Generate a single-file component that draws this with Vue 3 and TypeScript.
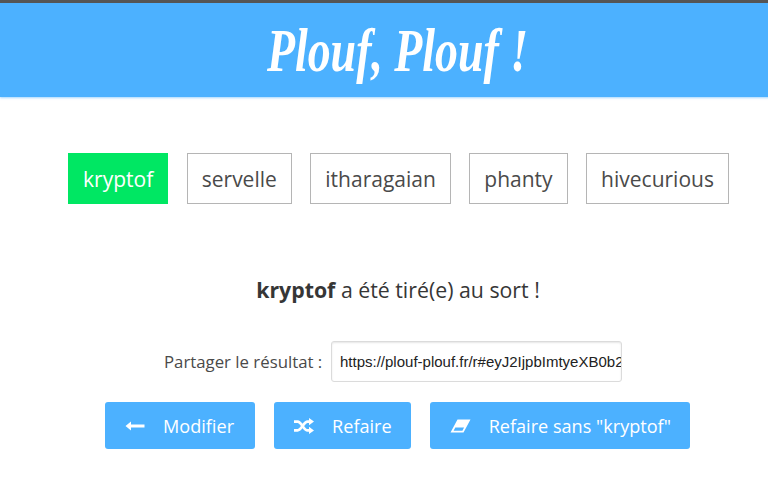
<script setup lang="ts">
const names = ['kryptof', 'servelle', 'itharagaian', 'phanty', 'hivecurious'];
const winner = 'kryptof';
const shareUrl = 'https://plouf-plouf.fr/r#eyJ2IjpbImtyeXB0b2YiLCJzZXJ2ZWxsZSJd';
</script>

<template>
  <div class="page">
    <header class="header">
      <h1 class="title">Plouf, Plouf !</h1>
    </header>

    <ul class="names">
      <li v-for="name in names" :key="name" class="name" :class="{ picked: name === winner }">{{ name }}</li>
    </ul>

    <p class="result"><strong>{{ winner }}</strong> a été tiré(e) au sort !</p>

    <div class="share">
      <label class="share-label" for="share-url">Partager le résultat :</label>
      <input id="share-url" class="share-input" type="text" readonly :value="shareUrl">
    </div>

    <div class="actions">
      <button class="btn btn-back" type="button">
        <svg class="icon" width="20" height="14" viewBox="0 0 20 14">
          <path d="M0.5 7 L6 2.6 V5.6 H19.5 V8.4 H6 V11.4 Z" fill="#fff" />
        </svg>
        Modifier
      </button>
      <button class="btn" type="button">
        <svg class="icon" width="20" height="16" viewBox="0 0 20 16">
          <path d="M0 3.6 H3.6 C7.6 3.6 9.4 12.4 13.6 12.4 H15.6" fill="none" stroke="#fff" stroke-width="2.7" />
          <path d="M0 12.4 H3.6 C7.6 12.4 9.4 3.6 13.6 3.6 H15.6" fill="none" stroke="#fff" stroke-width="2.7" />
          <path d="M15 0 L20 3.6 L15 7.2 Z M15 8.8 L20 12.4 L15 16 Z" fill="#fff" />
        </svg>
        Refaire
      </button>
      <button class="btn" type="button">
        <svg class="icon" width="21" height="14" viewBox="0 0 21 14">
          <path d="M7.5 0.5 H20.5 L13.5 13.5 H0.5 Z M3.6 11.8 H12.4 L14.1 8.6 H5.3 Z" fill="#fff" fill-rule="evenodd" />
        </svg>
        Refaire sans "kryptof"
      </button>
    </div>
  </div>
</template>

<style>
html, body {
  background: #fff;
  overflow: hidden;
}
</style>

<style scoped>
.page {
  width: 796px;
  height: 489px;
  overflow: hidden;
  border-top: 3px solid #555;
  box-sizing: border-box;
  font-family: "Open Sans", "Noto Sans", sans-serif;
  color: #4a4a4a;
}
.header {
  height: 94px;
  background: #4cb1ff;
  box-shadow: 0 1px 2px rgba(76, 177, 255, 0.5);
  display: flex;
  align-items: center;
  justify-content: center;
}
.title {
  margin: 0;
  color: #fff;
  font-family: "Liberation Serif", cursive;
  font-style: italic;
  font-weight: 700;
  font-size: 62px;
  line-height: 1;
  white-space: nowrap;
  transform: scaleX(0.74);
}
.names {
  list-style: none;
  margin: 56px 0 0;
  padding: 0 0 0 1px;
  display: flex;
  justify-content: center;
  gap: 18.5px;
}
.name {
  height: 51px;
  box-sizing: border-box;
  padding: 0 14px;
  border: 1px solid #b5b5b5;
  display: flex;
  align-items: center;
  font-size: 21px;
  white-space: nowrap;
}
.name.picked {
  background: #00e763;
  border-color: #00e763;
  color: #fff;
}
.result {
  margin: 71px 0 0;
  text-align: center;
  font-size: 21.3px;
  line-height: 30px;
  color: #363636;
}
.result strong {
  font-weight: 700;
}
.share {
  margin-top: 36px;
  padding-left: 164px;
  display: flex;
  align-items: center;
  gap: 8px;
}
.share-label {
  width: 159px;
  font-size: 16.8px;
  white-space: nowrap;
  color: #4a4a4a;
}
.share-input {
  width: 291px;
  height: 41px;
  box-sizing: border-box;
  padding: 0 0 0 8px;
  border: 1px solid #dbdbdb;
  border-radius: 3px;
  background: #fff;
  color: #222;
  font-family: "Liberation Sans", Arial, sans-serif;
  font-size: 15px;
  box-shadow: inset 0 1px 2px rgba(10, 10, 10, 0.1);
  outline: none;
}
.actions {
  margin-top: 20px;
  padding-right: 1px;
  display: flex;
  justify-content: center;
  gap: 19px;
}
.btn {
  height: 47px;
  padding: 0 19px 0 20px;
  border: none;
  border-radius: 3px;
  background: #4cb1ff;
  color: #fff;
  font-family: inherit;
  font-size: 18.1px;
  display: flex;
  align-items: center;
  gap: 18px;
  white-space: nowrap;
}
.btn-back {
  min-width: 150px;
}
.icon {
  flex: none;
}
</style>
